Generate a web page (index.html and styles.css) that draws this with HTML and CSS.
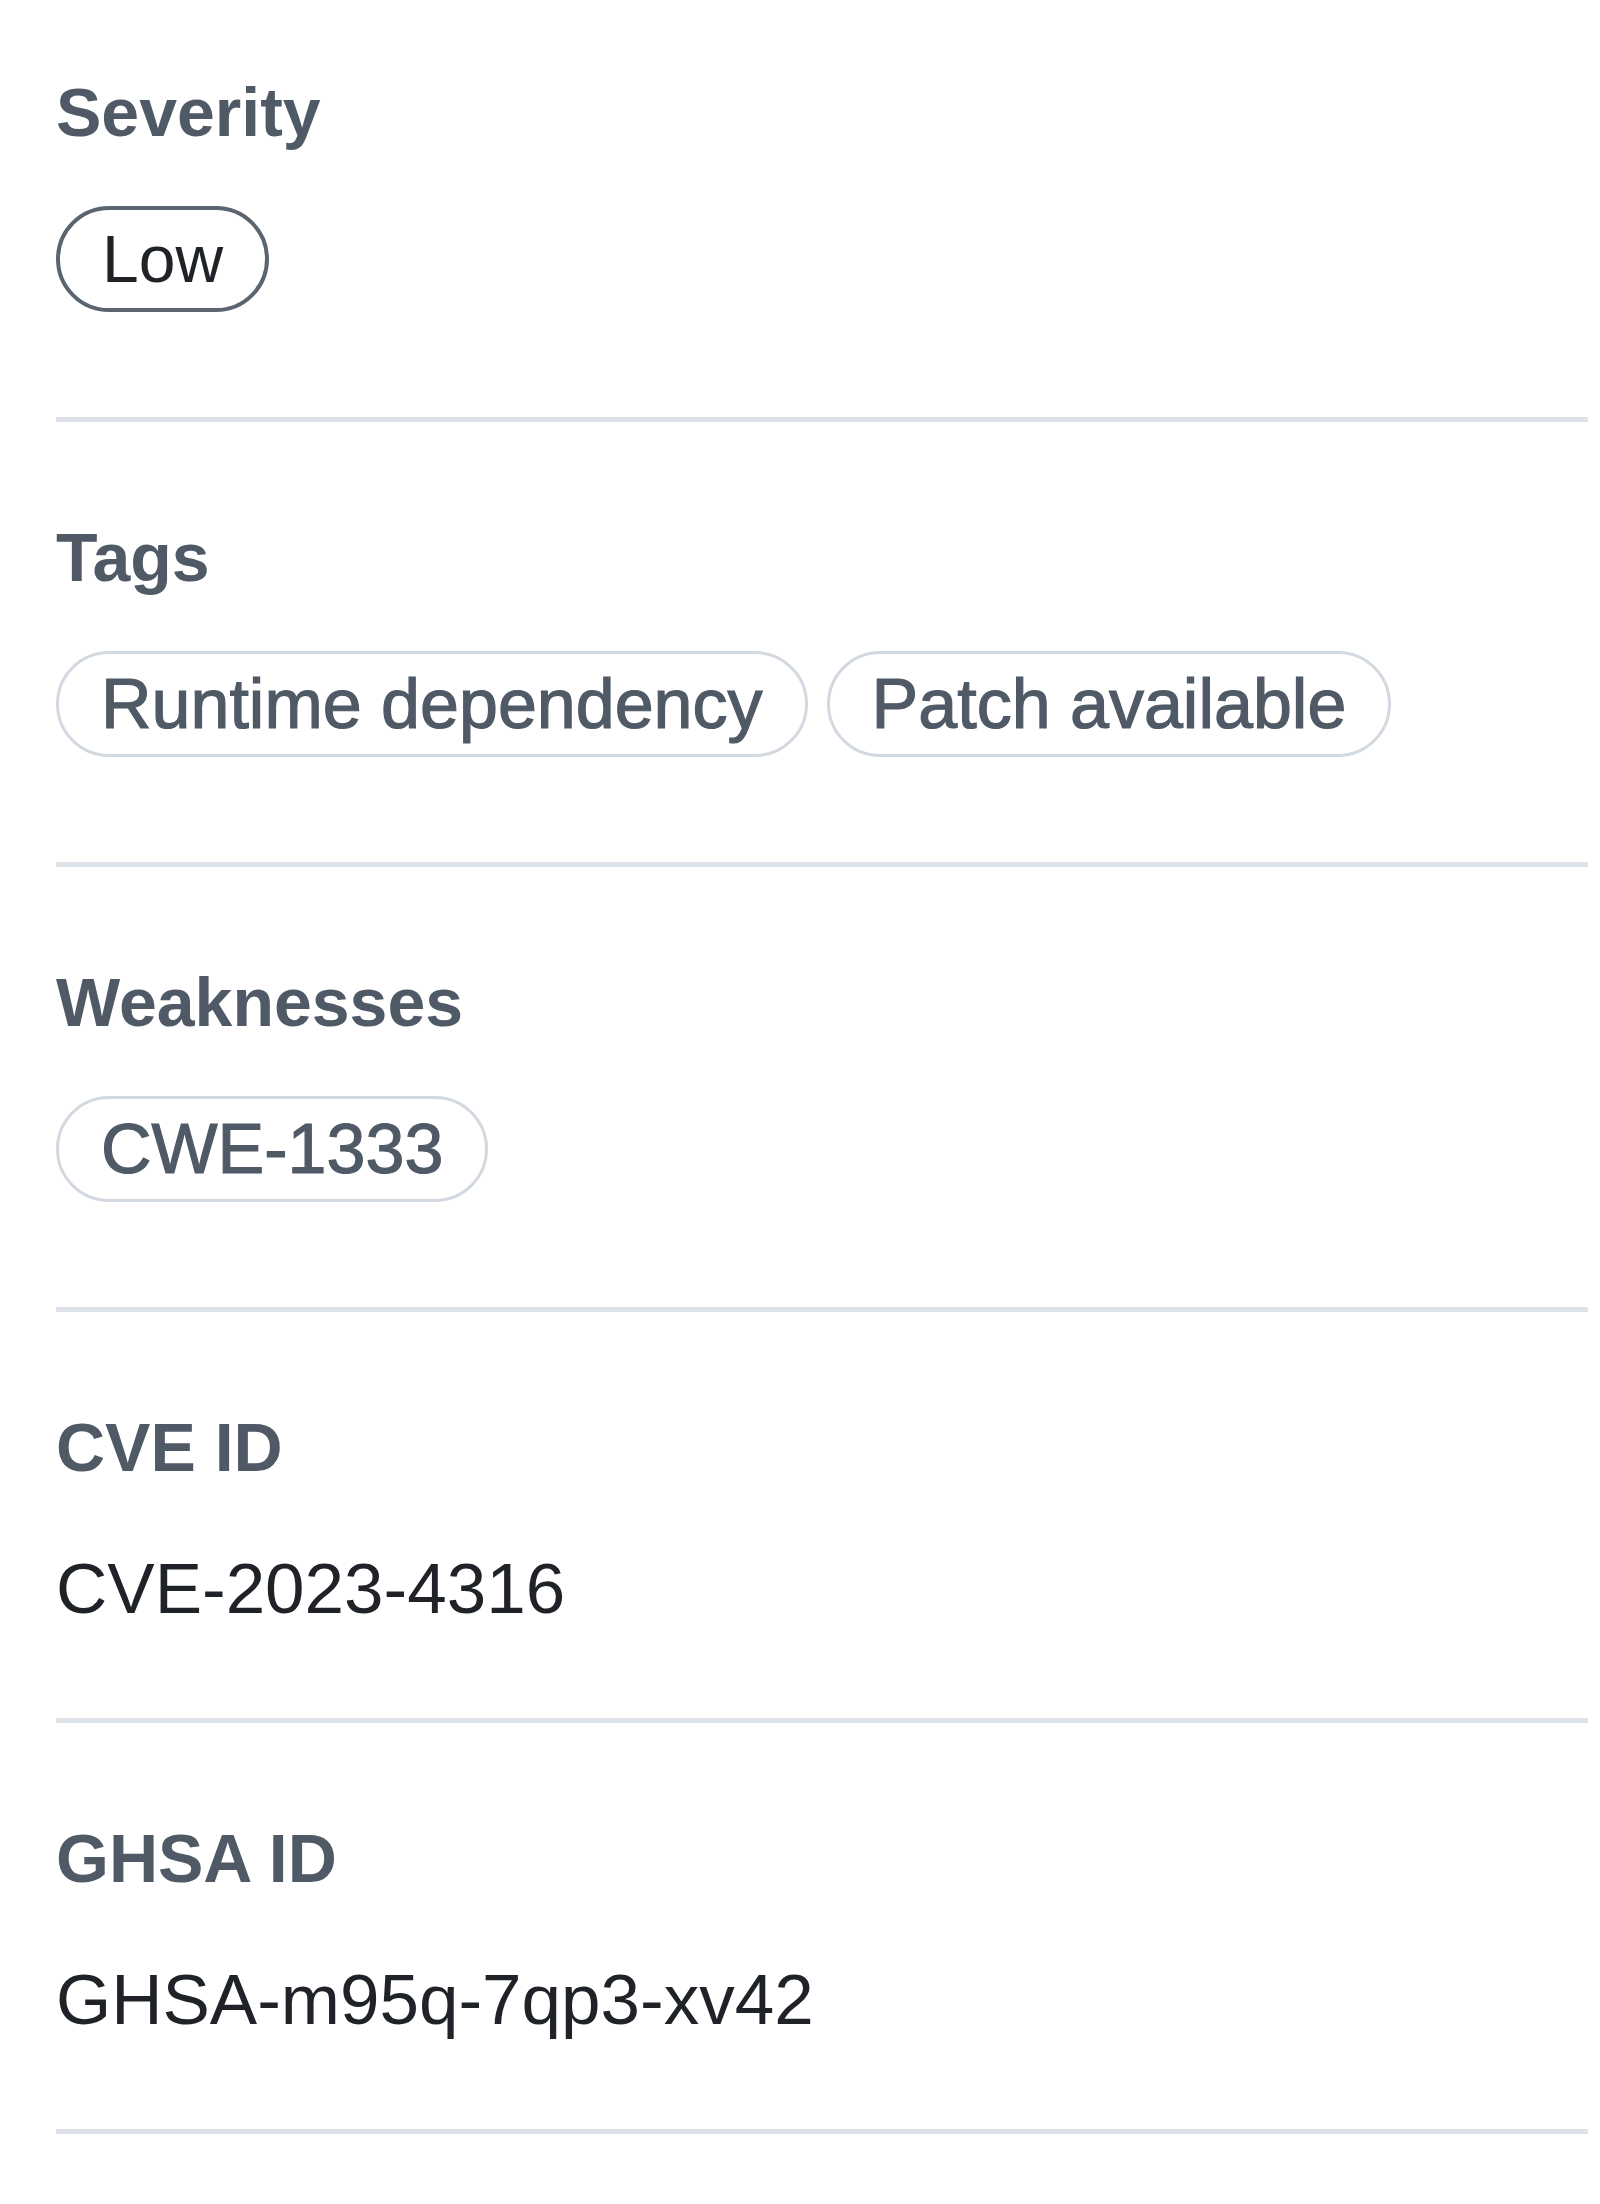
FILE: index.html
```html
<!DOCTYPE html>
<html lang="en">
<head>
<meta charset="utf-8">
<title>Advisory details</title>
<link rel="stylesheet" href="styles.css">
</head>
<body>
<div class="panel">
  <section class="section section-first">
    <h3 class="heading">Severity</h3>
    <div class="pills">
      <span class="pill pill-severity">Low</span>
    </div>
  </section>
  <section class="section">
    <h3 class="heading">Tags</h3>
    <div class="pills">
      <span class="pill">Runtime dependency</span>
      <span class="pill">Patch available</span>
    </div>
  </section>
  <section class="section">
    <h3 class="heading">Weaknesses</h3>
    <div class="pills">
      <span class="pill">CWE-1333</span>
    </div>
  </section>
  <section class="section section-text">
    <h3 class="heading">CVE ID</h3>
    <div class="value">CVE-2023-4316</div>
  </section>
  <section class="section section-text">
    <h3 class="heading">GHSA ID</h3>
    <div class="value">GHSA-m95q-7qp3-xv42</div>
  </section>
</div>
</body>
</html>
```

FILE: styles.css
```css
* {
  box-sizing: border-box;
}

html, body {
  margin: 0;
  padding: 0;
  background: #ffffff;
}

body {
  font-family: "Liberation Sans", Arial, Helvetica, sans-serif;
  color: #1f2328;
}

.panel {
  padding: 0 12px 0 56px;
}

.section {
  padding: 93px 0 105px 0;
  border-bottom: 5px solid #dde2e8;
}

.section-first {
  padding-top: 70px;
}

.section-text {
  padding-bottom: 87px;
}

.heading {
  margin: 0;
  font-size: 68px;
  line-height: 85px;
  font-weight: 700;
  color: #4f5a66;
}

.pills {
  display: flex;
  flex-wrap: wrap;
  gap: 19px;
  margin-top: 51px;
}

.pill {
  display: inline-flex;
  align-items: center;
  height: 106px;
  padding: 0 42px;
  border: 3px solid #d3d9e0;
  border-radius: 53px;
  font-size: 70px;
  line-height: 1;
  font-weight: 400;
  color: #4f5a66;
  -webkit-text-stroke: 1.2px #4f5a66;
  white-space: nowrap;
}

.pill-severity {
  border: 4px solid #5b6570;
  color: #1f2328;
  font-size: 66px;
  -webkit-text-stroke: 0;
  height: 106px;
}

.value {
  margin-top: 56px;
  font-size: 71px;
  line-height: 85px;
  font-weight: 400;
  color: #1f2328;
}
```
